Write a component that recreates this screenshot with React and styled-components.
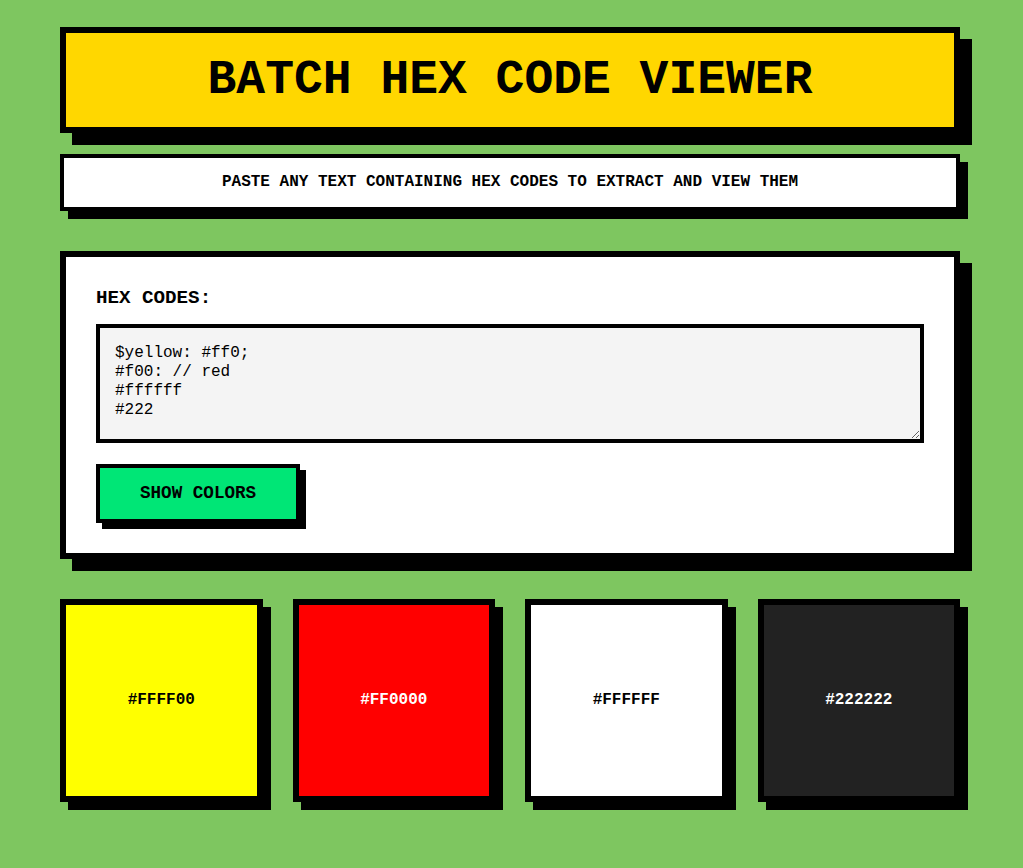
import styled, { createGlobalStyle } from "styled-components";

const swatches = [
  { hex: "#FFFF00", dark: false },
  { hex: "#FF0000", dark: true },
  { hex: "#FFFFFF", dark: false },
  { hex: "#222222", dark: true },
];

const App = () => {
  return (
    <>
      <GlobalStyle />
      <Page>
        <Header>
          <Title>BATCH HEX CODE VIEWER</Title>
        </Header>
        <Subtitle>PASTE ANY TEXT CONTAINING HEX CODES TO EXTRACT AND VIEW THEM</Subtitle>
        <Panel>
          <Label htmlFor="codes">HEX CODES:</Label>
          <Codes
            id="codes"
            defaultValue={"$yellow: #ff0;\n#f00: // red\n#ffffff\n#222"}
          />
          <ShowButton>SHOW COLORS</ShowButton>
        </Panel>
        <Grid>
          {swatches.map((s) => (
            <Swatch key={s.hex} style={{ background: s.hex }} $dark={s.dark}>
              {s.hex}
            </Swatch>
          ))}
        </Grid>
      </Page>
    </>
  );
};

const GlobalStyle = createGlobalStyle`
  body {
    margin: 0;
    background: #7ec660;
    font-family: "Liberation Mono", "Courier New", monospace;
  }
`;

const Page = styled.main`
  width: 900px;
  padding: 27px 0 58px 60px;
  display: flex;
  flex-direction: column;
`;

const Header = styled.header`
  background: #ffd700;
  border: 6px solid #000;
  box-shadow: 12px 12px 0 #000;
  padding: 20px;
  text-align: center;
  margin-bottom: 21px;
`;

const Title = styled.h1`
  margin: 0;
  font-size: 48px;
  line-height: 54px;
  font-weight: bold;
  color: #000;
`;

const Subtitle = styled.p`
  margin: 0 0 40px;
  background: #fff;
  border: 4px solid #000;
  box-shadow: 8px 8px 0 #000;
  padding: 15px;
  text-align: center;
  font-size: 16px;
  line-height: 19px;
  font-weight: bold;
`;

const Panel = styled.section`
  background: #fff;
  border: 6px solid #000;
  box-shadow: 12px 12px 0 #000;
  padding: 30px;
  display: flex;
  flex-direction: column;
  align-items: flex-start;
  margin-bottom: 40px;
`;

const Label = styled.label`
  font-size: 19.2px;
  line-height: 22px;
  font-weight: bold;
  margin-bottom: 15px;
`;

const Codes = styled.textarea`
  box-sizing: border-box;
  width: 100%;
  height: 119px;
  border: 4px solid #000;
  background: #f4f4f4;
  padding: 16px 15px 14px;
  font-family: "Liberation Mono", "Courier New", monospace;
  font-size: 16px;
  line-height: 19px;
  color: #000;
  margin: 0 0 21px;
  outline: none;
`;

const ShowButton = styled.button`
  background: #00e676;
  border: 4px solid #000;
  box-shadow: 6px 6px 0 #000;
  padding: 15px 40px;
  font-family: "Liberation Mono", "Courier New", monospace;
  font-size: 17.6px;
  line-height: 21px;
  font-weight: bold;
  color: #000;
  cursor: pointer;
`;

const Grid = styled.div`
  display: grid;
  grid-template-columns: repeat(4, 1fr);
  gap: 30px;
`;

const Swatch = styled.div`
  aspect-ratio: 1;
  box-sizing: border-box;
  border: 6px solid #000;
  box-shadow: 8px 8px 0 #000;
  display: flex;
  align-items: center;
  justify-content: center;
  font-size: 16px;
  font-weight: bold;
  color: ${(p) => (p.$dark ? "#fff" : "#000")};
`;

export default App;
